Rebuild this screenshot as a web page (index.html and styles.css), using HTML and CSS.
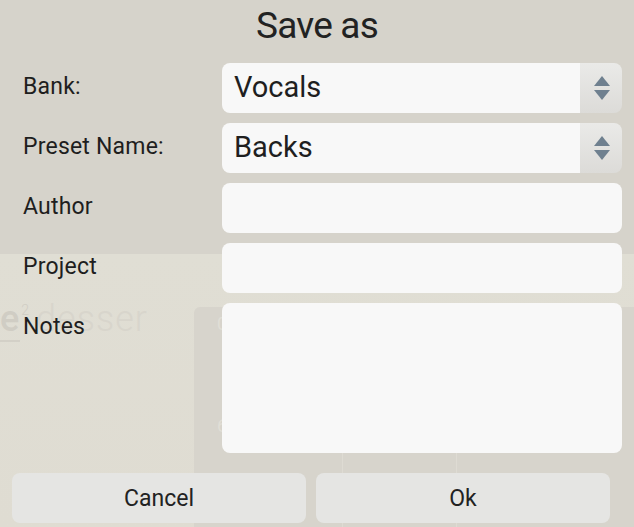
FILE: index.html
```html
<!DOCTYPE html>
<html>
<head>
<meta charset="utf-8">
<link rel="stylesheet" href="styles.css">
</head>
<body>
<div class="backdrop">
  <div class="ghost-logo"><span class="ghost-e">e</span><sup class="ghost-sup">2</sup><span class="ghost-rest">desser</span></div>
  <div class="ghost-panel">
    <span class="ghost-num n0">0</span>
    <span class="ghost-num n6">6</span>
    <span class="ghost-line l1"></span>
    <span class="ghost-line l2"></span>
  </div>
</div>
<div class="dialog">
  <h1 class="title">Save as</h1>
  <div class="form">
    <label class="label">Bank:</label>
    <div class="select">
      <div class="select-value">Vocals</div>
      <div class="stepper">
        <svg width="18" height="28" viewBox="0 0 18 28"><polygon points="9,2 17,12 1,12" fill="#6f808f"/><polygon points="1,16 17,16 9,26" fill="#6f808f"/></svg>
      </div>
    </div>
    <label class="label">Preset Name:</label>
    <div class="select">
      <div class="select-value">Backs</div>
      <div class="stepper">
        <svg width="18" height="28" viewBox="0 0 18 28"><polygon points="9,2 17,12 1,12" fill="#6f808f"/><polygon points="1,16 17,16 9,26" fill="#6f808f"/></svg>
      </div>
    </div>
    <label class="label">Author</label>
    <div class="field"></div>
    <label class="label">Project</label>
    <div class="field"></div>
    <label class="label">Notes</label>
    <div class="field"></div>
  </div>
  <div class="actions">
    <button class="btn">Cancel</button>
    <button class="btn">Ok</button>
  </div>
</div>
</body>
</html>
```
FILE: styles.css
```css
html, body {
  margin: 0;
  padding: 0;
}
body {
  width: 634px;
  height: 527px;
  overflow: hidden;
  position: relative;
  background: linear-gradient(to bottom, #d6d3cb 0, #d6d3cb 254px, #e0ded4 254px, #dfdcd2 527px);
  font-family: Roboto, "DejaVu Sans", sans-serif;
  color: #252525;
}
.backdrop {
  position: absolute;
  left: 0;
  top: 254px;
  width: 634px;
  height: 273px;
}
.ghost-logo {
  position: absolute;
  left: 0;
  top: 44px;
  font-size: 36px;
  font-weight: 300;
  color: #d8d5cc;
  letter-spacing: 1px;
  white-space: nowrap;
}
.ghost-e {
  color: #d0cdc4;
  font-weight: 500;
  border-bottom: 2px solid #d3d0c7;
}
.ghost-sup {
  font-size: 14px;
  color: #d0cdc4;
  vertical-align: 16px;
  margin: 0 6px 0 1px;
}
.ghost-panel {
  position: absolute;
  left: 194px;
  top: 53px;
  width: 440px;
  height: 220px;
  background: #d7d4cc;
  border-radius: 6px 0 0 0;
}
.ghost-num {
  position: absolute;
  left: 23px;
  font-size: 18px;
  color: #e0ded6;
}
.n0 { top: 6px; }
.n6 { top: 108px; }
.ghost-line {
  position: absolute;
  top: 0;
  width: 1px;
  height: 220px;
  background: #dedbd3;
}
.l1 { left: 148px; }
.l2 { left: 262px; }

.dialog {
  position: relative;
  z-index: 1;
}
.title {
  margin: 0;
  height: 53px;
  padding-top: 4px;
  text-align: center;
  font-size: 37px;
  font-weight: 400;
  line-height: 44px;
  letter-spacing: -0.8px;
  color: #222;
  box-sizing: border-box;
}
.form {
  margin-top: 10px;
  display: grid;
  grid-template-columns: 199px 400px;
  grid-template-rows: 50px 50px 50px 50px 150px;
  row-gap: 10px;
  padding-left: 23px;
}
.label {
  font-size: 23px;
  font-weight: 400;
  line-height: 28px;
  padding-top: 10px;
  color: #1e1e1e;
  letter-spacing: 0.2px;
}
.field {
  background: #f8f8f8;
  border-radius: 8px;
}
.select {
  display: flex;
}
.select-value {
  flex: 1;
  background: #f8f8f8;
  border-radius: 8px 0 0 8px;
  padding-left: 12px;
  font-size: 29px;
  font-weight: 400;
  line-height: 48px;
  color: #1f1f1f;
}
.stepper {
  width: 42px;
  background: linear-gradient(to bottom, #eaeae8, #dcdbd8);
  border-radius: 0 8px 8px 0;
  display: flex;
  align-items: center;
  justify-content: center;
}
.stepper svg {
  display: block;
  margin-left: 1px;
}
.actions {
  margin-top: 20px;
  padding: 0 24px 0 12px;
  display: grid;
  grid-template-columns: 1fr 1fr;
  column-gap: 10px;
}
.btn {
  height: 50px;
  border: none;
  border-radius: 8px;
  background: #e5e5e3;
  font-family: Roboto, "DejaVu Sans", sans-serif;
  font-size: 23px;
  font-weight: 400;
  color: #222;
  padding: 0;
}
```
